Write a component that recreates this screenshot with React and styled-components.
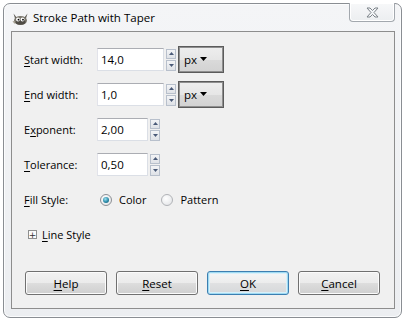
import React from "react";
import styled, { createGlobalStyle, css } from "styled-components";

const GlobalStyle = createGlobalStyle`
  html, body {
    margin: 0;
    padding: 0;
    background: #ffffff;
  }
  body {
    font-family: "Open Sans", "Noto Sans", sans-serif;
    font-size: 11px;
    color: #000;
  }
  * {
    box-sizing: border-box;
  }
`;

function Wilber() {
  return (
    <svg width="17" height="15" viewBox="0 0 17 15">
      <path d="M1.5 2.5 L5 7 L12 7 L15.5 2.5 L13.5 9 L3.5 9 Z" fill="#5f5c55" />
      <ellipse cx="8.5" cy="9.5" rx="6.5" ry="4.5" fill="#7a766c" />
      <ellipse cx="8.5" cy="11" rx="5" ry="2.8" fill="#4f4c45" />
      <circle cx="6" cy="8.5" r="2" fill="#fff" />
      <circle cx="10.5" cy="8.5" r="2" fill="#fff" />
      <circle cx="6.5" cy="8.7" r="0.9" fill="#000" />
      <circle cx="11" cy="8.7" r="0.9" fill="#000" />
      <path d="M0.5 10 L3.5 10.5 L2.5 13 Z" fill="#a59f8f" />
    </svg>
  );
}

function CloseGlyph() {
  return (
    <svg width="13" height="11" viewBox="0 0 13 11">
      <path
        d="M1 1 H4 L6.5 3.5 L9 1 H12 L8 5.5 L12 10 H9 L6.5 7.5 L4 10 H1 L5 5.5 Z"
        fill="#f4f6f8"
        stroke="#7d8389"
        strokeWidth="1"
        strokeLinejoin="round"
      />
    </svg>
  );
}

function Spinner() {
  return (
    <SpinBox>
      <SpinHalf>
        <svg width="5" height="3" viewBox="0 0 5 3">
          <path d="M0 3 L2.5 0 L5 3 Z" fill="#4a5a78" />
        </svg>
      </SpinHalf>
      <SpinHalf>
        <svg width="5" height="3" viewBox="0 0 5 3">
          <path d="M0 0 L2.5 3 L5 0 Z" fill="#4a5a78" />
        </svg>
      </SpinHalf>
    </SpinBox>
  );
}

function SpinField({ value, width, unit }) {
  return (
    <FieldRow>
      <Entry $width={width}>{value}</Entry>
      <Spinner />
      {unit && (
        <UnitCombo>
          {unit}
          <svg width="7" height="4" viewBox="0 0 7 4">
            <path d="M0 0 L7 0 L3.5 4 Z" fill="#000" />
          </svg>
        </UnitCombo>
      )}
    </FieldRow>
  );
}

export default function App() {
  return (
    <>
      <GlobalStyle />
      <Window>
        <TitleBar>
          <Wilber />
          <Title>Stroke Path with Taper</Title>
          <CloseButton>
            <CloseGlyph />
          </CloseButton>
        </TitleBar>
        <Panel>
          <Form>
            <Label>
              <U>S</U>tart width:
            </Label>
            <SpinField value="14,0" width={67} unit="px" />

            <Label>
              <U>E</U>nd width:
            </Label>
            <SpinField value="1,0" width={67} unit="px" />

            <Label>
              E<U>x</U>ponent:
            </Label>
            <SpinField value="2,00" width={51} />

            <Label>
              <U>T</U>olerance:
            </Label>
            <SpinField value="0,50" width={51} />

            <Label>
              <U>F</U>ill Style:
            </Label>
            <RadioGroup>
              <RadioOption>
                <RadioDot $checked />
                Color
              </RadioOption>
              <RadioOption>
                <RadioDot />
                Pattern
              </RadioOption>
            </RadioGroup>

            <Expander>
              <PlusBox>+</PlusBox>
              <span>
                <U>L</U>ine Style
              </span>
            </Expander>
          </Form>
          <ButtonBar>
            <Button>
              <U>H</U>elp
            </Button>
            <Button>
              <U>R</U>eset
            </Button>
            <Button $default>
              <U>O</U>K
            </Button>
            <Button>
              <U>C</U>ancel
            </Button>
          </ButtonBar>
        </Panel>
      </Window>
    </>
  );
}

const Window = styled.div`
  margin: 3px 3px 2px 3px;
  width: 399px;
  height: 315px;
  border: 1px solid #8a8e93;
  border-radius: 7px;
  background: linear-gradient(#f4f5f7, #eceef1);
  box-shadow: inset 0 0 0 1px #fbfcfd;
  display: flex;
  flex-direction: column;
`;

const TitleBar = styled.div`
  height: 27px;
  display: flex;
  align-items: flex-start;
  padding-left: 8px;
  padding-right: 6px;

  & > svg {
    margin-top: 7px;
  }
`;

const Title = styled.span`
  margin-left: 4px;
  margin-top: 6px;
  font-size: 11.5px;
  color: #000;
`;

const CloseButton = styled.div`
  margin-left: auto;
  margin-top: -1px;
  width: 46px;
  height: 19px;
  border: 1px solid #a3a8ae;
  border-top: none;
  border-radius: 0 0 4px 4px;
  background: linear-gradient(#f7f8f9, #eceef0);
  box-shadow: inset 0 0 0 1px #ffffff;
  display: flex;
  align-items: center;
  justify-content: center;
`;

const Panel = styled.div`
  flex: 1;
  margin: 0 6px 8px 7px;
  border: 1px solid #8d8d8d;
  background: #f0f0f0;
  display: flex;
  flex-direction: column;
`;

const Form = styled.div`
  flex: 1;
  display: grid;
  grid-template-columns: 73px 1fr;
  grid-auto-rows: 35px;
  align-items: center;
  align-content: start;
  padding: 10px 0 0 12px;
`;

const Label = styled.span`
  white-space: nowrap;
`;

const U = styled.span`
  text-decoration: underline;
  text-underline-offset: 2px;
`;

const FieldRow = styled.div`
  display: flex;
  align-items: center;
`;

const Entry = styled.div`
  width: ${(p) => p.$width}px;
  height: 23px;
  background: #fff;
  border: 1px solid #dbdfe6;
  border-top-color: #abadb3;
  border-left-color: #e2e3ea;
  padding-left: 3px;
  display: flex;
  align-items: center;
  font-size: 11.5px;
`;

const SpinBox = styled.div`
  margin-left: 2px;
  width: 10px;
  height: 22px;
  display: flex;
  flex-direction: column;
  gap: 1px;
`;

const SpinHalf = styled.div`
  flex: 1;
  border: 1px solid #b8c0cc;
  background: linear-gradient(#f3f4f6, #dfe2e7);
  display: flex;
  align-items: center;
  justify-content: center;
`;

const UnitCombo = styled.div`
  margin-left: 2px;
  width: 46px;
  height: 27px;
  border: 1px solid #5b5b5b;
  box-shadow: inset 0 0 0 1px #8f8f8f;
  background: linear-gradient(#eeeeee 0%, #e6e6e6 50%, #dadada 51%, #d2d2d2 100%);
  display: flex;
  align-items: center;
  gap: 3px;
  padding-left: 5px;
  padding-bottom: 1px;
  font-size: 11.5px;
`;

const RadioGroup = styled.div`
  display: flex;
  align-items: center;
  padding-left: 3px;
  gap: 15px;
`;

const RadioOption = styled.label`
  display: flex;
  align-items: center;
  gap: 7px;
`;

const RadioDot = styled.span`
  width: 12px;
  height: 12px;
  border-radius: 50%;
  border: 1px solid #b1b3b7;
  background: radial-gradient(circle at 40% 35%, #ffffff, #dfe1e4);
  position: relative;

  ${(p) =>
    p.$checked &&
    css`
      border-color: #8c8f94;
      &::after {
        content: "";
        position: absolute;
        left: 2px;
        top: 2px;
        width: 6px;
        height: 6px;
        border-radius: 50%;
        background: radial-gradient(circle at 40% 35%, #9fe2f2, #2a8aa8 55%, #0f4d66);
      }
    `}
`;

const Expander = styled.div`
  grid-column: 1 / -1;
  display: flex;
  align-items: center;
  padding-left: 4px;
  gap: 5px;
`;

const PlusBox = styled.span`
  width: 9px;
  height: 9px;
  border: 1px solid #8e8f8f;
  background: #fbfbfb;
  font-size: 9px;
  line-height: 6px;
  display: flex;
  align-items: center;
  justify-content: center;
  color: #333;
  font-family: "DejaVu Sans", sans-serif;
`;

const ButtonBar = styled.div`
  display: flex;
  gap: 9px;
  padding: 0 13px 13px 13px;
`;

const Button = styled.div`
  width: 82px;
  height: 24px;
  border: 1px solid #707070;
  border-radius: 3px;
  background: linear-gradient(#f2f2f2 0%, #ebebeb 50%, #dddddd 51%, #cfcfcf 100%);
  box-shadow: inset 0 0 0 1px #fbfbfb;
  display: flex;
  align-items: center;
  justify-content: center;
  font-size: 11.5px;

  ${(p) =>
    p.$default &&
    css`
      border-color: #3c7fb1;
      box-shadow: inset 0 0 0 1px #9fdaf2, inset 0 0 0 2px #d8f0fa;
      background: linear-gradient(#f4f6f7 0%, #ececec 50%, #e0e1e2 51%, #d6d8da 100%);
    `}
`;
